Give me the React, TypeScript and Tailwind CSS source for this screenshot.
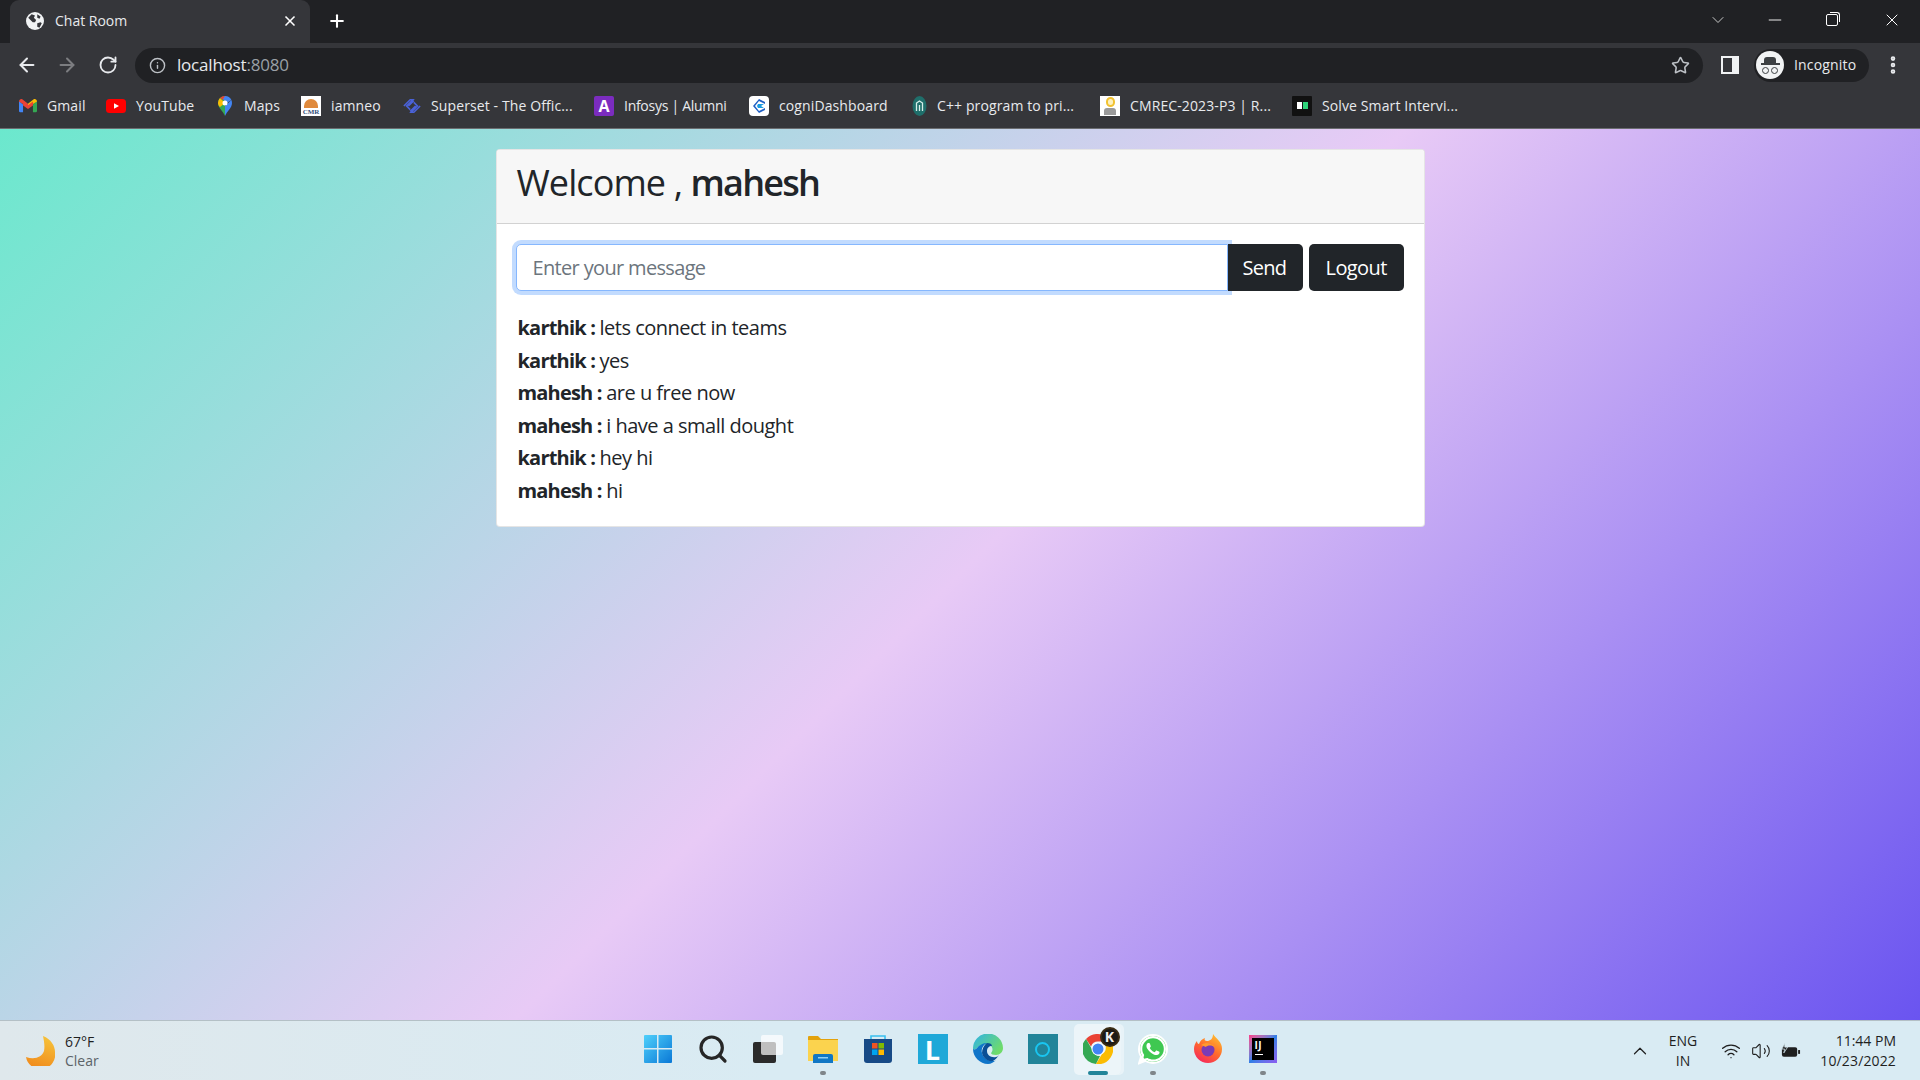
import {ReactNode} from "react";
import {ArrowLeft, ArrowRight, ChevronDown, ChevronUp, Info, Minus, MoreVertical, Plus, RotateCw, Search, Star, Volume2, Wifi, X} from "lucide-react";
import {FaWhatsapp} from "react-icons/fa";

const Globe = () => (
    <svg viewBox="0 0 16 16" className="h-[18px] w-[18px]">
        <circle cx="8" cy="8" r="8" fill="#f1f3f4" />
        <path d="M2 5l3-3 3 1-1 2 2 2-1 2H6L4 7zM10 10l3-1 1 1-2 4-2-1zM10 2l3 2-1 2-2-1z" fill="#35363a" />
    </svg>
);

const GmailIcon = () => (
    <svg viewBox="0 0 20 16" className="h-[15px] w-[18px]">
        <path d="M0 3v11a1.5 1.5 0 0 0 1.5 1.5H4.5V7z" fill="#4285f4" />
        <path d="M20 3v11a1.5 1.5 0 0 1-1.5 1.5H15.5V7z" fill="#34a853" />
        <path d="M0 3.5C0 1 2.5 0 4 1.2L10 6v4L0 3.5z" fill="#ea4335" />
        <path d="M20 3.5C20 1 17.5 0 16 1.2L10 6v4l10-6.5z" fill="#fbbc04" />
        <path d="M4.5 3.5L10 7.6l5.5-4.1V8L10 12 4.5 8z" fill="#ea4335" />
    </svg>
);

const YoutubeIcon = () => (
    <svg viewBox="0 0 20 14" className="h-[14px] w-[20px]">
        <rect width="20" height="14" rx="3.5" fill="#ff0000" />
        <path d="M8 4.2l5 2.8-5 2.8z" fill="#fff" />
    </svg>
);

const MapsIcon = () => (
    <svg viewBox="0 0 14 20" className="h-[20px] w-[14px]">
        <path d="M7 20C5 15 0 12 0 7a7 7 0 0 1 7-7z" fill="#34a853" />
        <path d="M7 20c2-5 7-8 7-13 0-1-.2-2-.6-3L7 10z" fill="#4285f4" />
        <path d="M0 7a7 7 0 0 1 2-5l5 5-5 4C.8 10 0 8.500 0 7z" fill="#fbbc04" />
        <path d="M2 2a7 7 0 0 1 5-2v5z" fill="#ea4335" />
        <path d="M7 0a7 7 0 0 1 6.400 4L9 7 5 3z" fill="#4285f4" />
        <circle cx="7" cy="7" r="2.500" fill="#fff" />
    </svg>
);

const CmrIcon = () => (
    <div className="flex h-5 w-5 flex-col items-center justify-end overflow-hidden bg-white">
        <div className="h-[9px] w-[14px] rounded-t-full bg-[#e08a3c]" />
        <div className="font-['Liberation_Serif',serif] text-[7px] font-bold leading-[8px] text-[#34507a]">CMR</div>
    </div>
);

const SupersetIcon = () => (
    <svg viewBox="0 0 20 18" className="h-[18px] w-[18px]" fill="none" stroke="#4a62d8" strokeWidth="1.800">
        <path d="M1 9l7-7h3L4 9l4 4M6 9l6-6M19 9l-7 7H9l7-7-4-4M14 9l-6 6" />
    </svg>
);

const AlumniIcon = () => (
    <div className="flex h-5 w-5 items-center justify-center rounded-[2px] bg-[#7b2cbf] font-['Open_Sans',sans-serif] text-[16px] font-bold text-white">
        A
    </div>
);

const CogniIcon = () => (
    <div className="flex h-5 w-5 items-center justify-center rounded-[4px] bg-white">
        <svg viewBox="0 0 14 14" className="h-[14px] w-[14px]">
            <path d="M7 0l6 3v2L7 2 3 7l4 5 6-3v2l-6 3-6-7z" fill="#1f5fc4" />
            <path d="M6 5h6l-3 2 3 2H6l-1-2z" fill="#1a9be0" />
        </svg>
    </div>
);

const GfgIcon = () => (
    <svg viewBox="0 0 14 20" className="h-[20px] w-[15px]">
        <ellipse cx="7" cy="10" rx="7" ry="10" fill="#1f6f6b" />
        <path d="M4 15V7l3-2 3 2v8M7 9v6" stroke="#d6efe9" strokeWidth="1.300" fill="none" />
    </svg>
);

const BulbIcon = () => (
    <div className="flex h-5 w-5 flex-col items-center bg-white pt-[1px]">
        <div className="h-[10px] w-[9px] rounded-full border-2 border-[#f2c230] bg-[#fdf1c0]" />
        <div className="mt-[1px] h-[7px] w-[12px] rounded-t-[3px] bg-[#9a9a9a]" />
    </div>
);

const NinjaIcon = () => (
    <div className="flex h-5 w-5 items-center justify-center gap-[1px] rounded-[1px] bg-[#111]">
        <div className="h-[7px] w-[5px] bg-white" />
        <div className="h-[7px] w-[5px] bg-[#2ed47a]" />
    </div>
);

const bookmarks: {icon: ReactNode; label: string; box: string; text: string; gap: string; tight?: boolean}[] = [
    {icon: <GmailIcon />, label: "Gmail", box: "w-[18px]", text: "w-[38px]", gap: "ml-[19px]"},
    {icon: <YoutubeIcon />, label: "YouTube", box: "w-[20px]", text: "w-[60px]", gap: "ml-[21px]"},
    {icon: <MapsIcon />, label: "Maps", box: "w-[14px]", text: "w-[38px] translate-x-[2px]", gap: "ml-[22px]"},
    {icon: <CmrIcon />, label: "iamneo", box: "w-[20px]", text: "w-[51px]", gap: "ml-[21px]"},
    {icon: <SupersetIcon />, label: "Superset - The Offic...", box: "w-[18px]", text: "w-[144px]", gap: "ml-[21px]"},
    {icon: <AlumniIcon />, label: "Infosys | Alumni", box: "w-[20px]", text: "w-[105px]", gap: "ml-[19px]", tight: true},
    {icon: <CogniIcon />, label: "cogniDashboard", box: "w-[20px]", text: "w-[110px]", gap: "ml-[20px]"},
    {icon: <GfgIcon />, label: "C++ program to pri...", box: "w-[15px]", text: "w-[144px]", gap: "ml-[23px]"},
    {icon: <BulbIcon />, label: "CMREC-2023-P3 | R...", box: "w-[20px]", text: "w-[143px]", gap: "ml-[19px]"},
    {icon: <NinjaIcon />, label: "Solve Smart Intervi...", box: "w-[20px]", text: "w-[136px]", gap: "ml-[19px]"},
];

const messages = [
    {from: "karthik", text: "lets connect in teams"},
    {from: "karthik", text: "yes"},
    {from: "mahesh", text: "are u free now"},
    {from: "mahesh", text: "i have a small dought"},
    {from: "karthik", text: "hey hi"},
    {from: "mahesh", text: "hi"},
];

const WindowsLogo = () => (
    <svg viewBox="0 0 30 30" className="h-[30px] w-[30px]">
        <defs>
            <linearGradient id="win" x1="0" y1="0" x2="1" y2="1">
                <stop offset="0" stopColor="#4fd0fb" />
                <stop offset="1" stopColor="#0a78d6" />
            </linearGradient>
        </defs>
        <path d="M1 2a1 1 0 0 1 1-1h12v13H1zM15.500 1H28a1 1 0 0 1 1 1v12H15.500zM1 15.500h13V29H2a1 1 0 0 1-1-1zM15.500 15.500H29V28a1 1 0 0 1-1 1H15.500z" fill="url(#win)" />
    </svg>
);

const FilesIcon = () => (
    <svg viewBox="0 0 30 28" className="h-[28px] w-[30px]">
        <path d="M0 2a1 1 0 0 1 1-1h9l3 3h17v4H0z" fill="#e3a20c" />
        <path d="M0 5h30v21H0z" fill="#fbd34e" />
        <path d="M5 21a2 2 0 0 1 2-2h16a2 2 0 0 1 2 2v7H5z" fill="#1177c4" />
        <rect x="10" y="22" width="10" height="1.500" fill="#8fd0f5" />
    </svg>
);

const StoreIcon = () => (
    <svg viewBox="0 0 30 30" className="h-[30px] w-[30px]">
        <path d="M8 5V2h14v3" fill="none" stroke="#38c0f0" strokeWidth="1.600" />
        <path d="M1 5h28v21a3 3 0 0 1-3 3H4a3 3 0 0 1-3-3z" fill="#174a86" />
        <rect x="9" y="9" width="5.500" height="5.500" fill="#f05323" />
        <rect x="15.500" y="9" width="5.500" height="5.500" fill="#7fba00" />
        <rect x="9" y="15.500" width="5.500" height="5.500" fill="#00a4ef" />
        <rect x="15.500" y="15.500" width="5.500" height="5.500" fill="#ffb900" />
    </svg>
);

const LIcon = () => (
    <div className="flex h-[30px] w-[30px] items-center justify-center bg-[#1fa8d8] font-['Open_Sans',sans-serif] text-[27px] font-bold leading-none text-white">
        L
    </div>
);

const EdgeIcon = () => (
    <svg viewBox="0 0 30 30" className="h-[30px] w-[30px]">
        <defs>
            <linearGradient id="edge" x1="0" y1="0" x2="1" y2="0.600">
                <stop offset="0" stopColor="#2fb2e8" />
                <stop offset="1" stopColor="#6fdc6a" />
            </linearGradient>
        </defs>
        <path d="M0 15a15 15 0 0 1 30-1c0 4-3 7-7 7-3 0-5-1-5-2 2-2 2-5 0-7-4-3-11-2-14 2-1 1-3 2-4 1z" fill="url(#edge)" />
        <path d="M0 15c2 1 3 0 4-1 2-3 6-5 10-5-4 2-6 6-5 10 1 5 6 8 11 8 1 0 2 0 3-1-2 2-5 4-8 4C7 30 0 23 0 15z" fill="#0f75c9" />
        <path d="M9 19c0-4 2-8 5-10 3 0 5 1 5 3-3 0-5 2-5 5 0 4 4 7 9 6 1 0 2-1 3-2-2 3-4 5-6 6-5 1-10-3-11-8z" fill="#0a4f96" />
    </svg>
);

const CortanaIcon = () => (
    <div className="flex h-[30px] w-[30px] items-center justify-center bg-[#218499]">
        <div className="h-[15px] w-[15px] rounded-full border-2 border-[#19c5f0]" />
    </div>
);

const ChromeIcon = () => (
    <div className="relative">
        <svg viewBox="0 0 30 30" className="h-[30px] w-[30px]">
            <path d="M15 0a15 15 0 0 1 13 7.500H15a7.500 7.500 0 0 0-7 5L3 5a15 15 0 0 1 12-5z" fill="#ea4335" />
            <path d="M3 5l7 12a7 7 0 0 0 7 5l-4 8A15 15 0 0 1 3 5z" fill="#34a853" />
            <path d="M28 7.500A15 15 0 0 1 13 30l6-10a7 7 0 0 0 0-12.500z" fill="#fbbc04" />
            <circle cx="15" cy="15" r="6.500" fill="#fff" />
            <circle cx="15" cy="15" r="5.500" fill="#4285f4" />
        </svg>
        <div className="absolute right-[-7px] top-[-7px] flex h-[20px] w-[20px] items-center justify-center rounded-full border-2 border-[#3a2c14] bg-[#1d1a15] font-['Open_Sans',sans-serif] text-[14px] font-bold leading-none text-[#f0f0f0]">
            K
        </div>
    </div>
);

const WhatsappIcon = () => (
    <div className="relative flex h-[30px] w-[30px] items-center justify-center rounded-full bg-white">
        <div className="absolute bottom-[-1px] left-0 h-[9px] w-[9px] bg-white [clip-path:polygon(0_100%,100%_60%,30%_0)]" />
        <div className="relative flex h-[26px] w-[26px] items-center justify-center rounded-full bg-[#3fc851]">
            <FaWhatsapp className="h-[30px] w-[30px] text-white" />
        </div>
    </div>
);

const FirefoxIcon = () => (
    <svg viewBox="0 0 30 30" className="h-[30px] w-[30px]">
        <defs>
            <linearGradient id="fox" x1="0.800" y1="0" x2="0.200" y2="1">
                <stop offset="0" stopColor="#ffc02f" />
                <stop offset="0.500" stopColor="#ff6b2c" />
                <stop offset="1" stopColor="#f5245e" />
            </linearGradient>
        </defs>
        <path d="M20 0c1 2 4 4 6 7 2 2 3 5 3 8a14 14 0 1 1-28 0c0-3 1-6 3-8 0 2 1 3 2 3 1-3 3-5 6-6-1 2 0 3 2 3 3 0 6-2 6-7z" fill="url(#fox)" />
        <circle cx="15" cy="16" r="6.500" fill="#7a3bb5" />
        <path d="M8 11c4-3 10-3 14 2-3-2-8-2-9 0z" fill="#ff9a2e" />
    </svg>
);

const IdeaIcon = () => (
    <div className="flex h-[28px] w-[28px] bg-gradient-to-br from-[#fb3a88] via-[#2d7fe6] to-[#8a5cf0] p-[3px]">
        <div className="flex h-full w-full flex-col bg-black pl-[3px] pt-[1px] font-['Open_Sans',sans-serif] text-[10px] font-bold leading-[12px] tracking-[0.05em] text-white">
            IJ
            <div className="mt-[3px] h-[1px] w-[8px] bg-white" />
        </div>
    </div>
);

const taskbarApps: {icon: ReactNode; dot?: boolean; active?: boolean}[] = [
    {icon: <WindowsLogo />},
    {icon: <Search className="h-[32px] w-[32px] text-[#262626]" strokeWidth={2.400} />},
    {
        icon: (
            <div className="relative h-[28px] w-[30px]">
                <div className="absolute bottom-0 left-0 h-[21px] w-[23px] rounded-[2px] bg-[#2b2b2b]" />
                <div className="absolute right-0 top-0 h-[20px] w-[22px] rounded-[2px] bg-white/70" />
            </div>
        ),
    },
    {icon: <FilesIcon />, dot: true},
    {icon: <StoreIcon />},
    {icon: <LIcon />},
    {icon: <EdgeIcon />},
    {icon: <CortanaIcon />},
    {icon: <ChromeIcon />, active: true},
    {icon: <WhatsappIcon />, dot: true},
    {icon: <FirefoxIcon />},
    {icon: <IdeaIcon />, dot: true},
];

const App = () => {
    return (
        <div className="flex h-[1080px] w-[1920px] flex-col overflow-hidden font-['Open_Sans',sans-serif]">
            {/* tab strip */}
            <div className="flex h-[43px] shrink-0 items-end bg-[#202124] pl-[10px] pr-[8px]">
                <div className="flex h-[43px] w-[300px] items-center rounded-t-[9px] bg-[#35363a] pb-[2px] pl-[16px] pr-[12px]">
                    <Globe />
                    <span className="ml-[11px] flex-1 text-[14px] text-[#e8eaed]">Chat Room</span>
                    <X className="h-[16px] w-[16px] text-white" strokeWidth={2.500} />
                </div>
                <Plus className="ml-[17px] mb-[12px] h-[20px] w-[20px] text-white" strokeWidth={2.500} />
                <div className="mb-[13px] ml-auto flex items-center">
                    <ChevronDown className="h-[20px] w-[20px] text-[#c8c8c8]" strokeWidth={1.200} />
                    <Minus className="ml-[37px] h-[20px] w-[20px] text-white" strokeWidth={1.100} />
                    <div className="relative ml-[41px] h-[12px] w-[12px] rounded-[2px] border border-white">
                        <div className="absolute right-[-3px] top-[-3px] h-[10px] w-[10px] rounded-tr-[3px] border-r border-t border-white" />
                    </div>
                    <X className="ml-[44px] mr-[10px] h-[20px] w-[20px] text-white" strokeWidth={1.200} />
                </div>
            </div>

            {/* toolbar */}
            <div className="flex h-[44px] shrink-0 items-center bg-[#35363a] pl-[16px]">
                <ArrowLeft className="h-[22px] w-[22px] text-[#e8eaed]" strokeWidth={2.200} />
                <ArrowRight className="ml-[18px] h-[22px] w-[22px] text-[#7c7d80]" strokeWidth={2.200} />
                <RotateCw className="ml-[20px] h-[20px] w-[20px] text-[#e8eaed]" strokeWidth={2.200} />
                <div className="ml-[17px] flex h-[35px] w-[1568px] items-center rounded-full bg-[#202124] pl-[14px] pr-[13px]">
                    <Info className="h-[17px] w-[17px] text-[#bdc1c6]" strokeWidth={2} />
                    <span className="ml-[11px] flex-1 text-[17px] tracking-[-0.012em] text-[#e8eaed]">
                        localhost<span className="text-[#9aa0a6]">:8080</span>
                    </span>
                    <Star className="h-[19px] w-[19px] text-[#bdc1c6]" strokeWidth={2} />
                </div>
                <div className="ml-[18px] flex h-[18px] w-[18px] justify-end border-2 border-[#f1f3f4]">
                    <div className="h-full w-[5px] bg-[#f1f3f4]" />
                </div>
                <div className="ml-[15px] flex h-[33px] w-[115px] items-center rounded-full bg-[#202124] pl-[2px]">
                    <div className="flex h-[28px] w-[28px] flex-col items-center justify-center rounded-full bg-[#f1f3f4]">
                        <div className="h-[6px] w-[12px] rounded-t-[3px] bg-[#3c4043]" />
                        <div className="h-[2px] w-[19px] bg-[#3c4043]" />
                        <div className="mt-[2px] flex gap-[2px]">
                            <div className="h-[7px] w-[7px] rounded-full border border-[#3c4043]" />
                            <div className="h-[7px] w-[7px] rounded-full border border-[#3c4043]" />
                        </div>
                    </div>
                    <span className="ml-[10px] pb-[1px] text-[14px] tracking-[0.012em] text-[#e8eaed]">Incognito</span>
                </div>
                <MoreVertical className="ml-[13px] h-[22px] w-[22px] text-[#e8eaed]" strokeWidth={3} />
            </div>

            {/* bookmarks bar */}
            <div className="flex h-[42px] shrink-0 items-center border-b border-[#6b6d70] bg-[#35363a] pb-[4px]">
                {bookmarks.map((b) => (
                    <div key={b.label} className={`flex items-center ${b.gap}`}>
                        <div className={`flex items-center justify-center ${b.box}`}>{b.icon}</div>
                        <span className={`ml-[10px] whitespace-nowrap text-[14px] text-[#e8eaed] ${b.tight ? "tracking-[-0.02em]" : "tracking-[0.008em]"} ${b.text}`}>
                            {b.label}
                        </span>
                    </div>
                ))}
            </div>

            {/* page */}
            <div className="flex flex-1 justify-center bg-[linear-gradient(135deg,#6be8cd_0%,#e8caf6_50%,#6a54f0_100%)] pt-[20px]">
                <div className="h-[378px] w-[929px] overflow-hidden rounded-[4px] border border-black/10 bg-white text-[#212529]">
                    <div className="flex h-[74px] items-center border-b border-black/15 bg-[#f7f7f7] pb-[7px] pl-[20px]">
                        <h2 className="text-[36px] font-medium leading-none tracking-[-0.025em]">
                            Welcome , <b className="font-semibold tracking-[-0.05em]">mahesh</b>
                        </h2>
                    </div>
                    <div className="pl-[19px] pr-[20px] pt-[20px]">
                        <div className="flex">
                            <input
                                readOnly
                                placeholder="Enter your message"
                                className="h-[47px] w-[715px] rounded-l-[5px] border border-[#86b7fe] bg-white px-[16px] text-[20px] tracking-[-0.033em] shadow-[0_0_0_4px_rgba(13,110,253,0.25)] outline-none placeholder:text-[#6c757d]"
                            />
                            <button className="relative h-[47px] w-[75px] rounded-r-[5px] bg-[#212529] pr-[2px] text-[20px] tracking-[-0.035em] text-white">
                                Send
                            </button>
                            <button className="ml-[6px] h-[47px] w-[95px] rounded-[5px] bg-[#212529] text-[20px] tracking-[-0.03em] text-white">
                                Logout
                            </button>
                        </div>
                        <ul className="mt-[21px] pl-[2px] text-[20px] leading-[32.5px] tracking-[-0.025em]">
                            {messages.map((m, i) => (
                                <li key={i}>
                                    <b className="font-bold tracking-[-0.04em]">{m.from} : </b>
                                    {m.text}
                                </li>
                            ))}
                        </ul>
                    </div>
                </div>
            </div>

            {/* taskbar */}
            <div className="grid h-[60px] shrink-0 grid-cols-[1fr_660px_1fr] items-center border-t border-[#b4c0c6] bg-[linear-gradient(90deg,#dfe8ec,#d9ebf3_40%,#d9ebf3)]">
                <div className="flex items-center pl-[25px]">
                    <svg viewBox="0 0 30 30" className="h-[30px] w-[30px]">
                        <defs>
                            <linearGradient id="moon" x1="0.700" y1="0" x2="0.400" y2="1">
                                <stop offset="0" stopColor="#f6c23a" />
                                <stop offset="1" stopColor="#f08a1c" />
                            </linearGradient>
                        </defs>
                        <path d="M18 0c8 3 12 10 12 16a14 14 0 0 1-29 5c9 3 16 0 18-6 1-5 0-10-1-15z" fill="url(#moon)" />
                    </svg>
                    <div className="ml-[10px] text-[14px] leading-[19px]">
                        <div className="text-[#1f1f1f]">67°F</div>
                        <div className="text-[#5c6368]">Clear</div>
                    </div>
                </div>
                <div className="mb-[3px] flex">
                    {taskbarApps.map((app, i) => (
                        <div key={i} className="relative flex h-[55px] w-[55px] items-center justify-center">
                            {app.active && <div className="absolute inset-x-[4px] inset-y-[2px] rounded-[5px] bg-white/50 shadow-[3px_0_0_rgba(255,255,255,0.4)]" />}
                            <div className="relative">{app.icon}</div>
                            {app.dot && <div className="absolute bottom-[2px] h-[4px] w-[6px] rounded-full bg-[#7f8589]" />}
                            {app.active && <div className="absolute bottom-[2px] h-[4px] w-[20px] rounded-full bg-[#218499]" />}
                        </div>
                    ))}
                </div>
                <div className="flex items-center justify-end pr-[24px] text-[#1f1f1f]">
                    <ChevronUp className="h-[22px] w-[22px]" strokeWidth={1.300} />
                    <div className="ml-[18px] text-center text-[14px] leading-[20px]">
                        ENG
                        <br />
                        IN
                    </div>
                    <Wifi className="ml-[24px] h-[20px] w-[20px]" strokeWidth={1.600} />
                    <Volume2 className="ml-[10px] h-[20px] w-[20px]" strokeWidth={1.300} />
                    <svg viewBox="0 0 22 16" className="ml-[9px] h-[16px] w-[21px]">
                        <rect x="2" y="4" width="16" height="10" rx="2" fill="#1f1f1f" />
                        <rect x="19" y="7" width="2" height="4" fill="#1f1f1f" />
                        <path d="M5 0L2 6h3l-1 4 4-6H5z" fill="#1f1f1f" stroke="#d9ebf3" strokeWidth="0.800" />
                    </svg>
                    <div className="ml-[19px] text-right text-[14px] leading-[20px]">
                        <div>11:44 PM</div>
                        <div className="tracking-[0.01em]">10/23/2022</div>
                    </div>
                </div>
            </div>
        </div>
    );
};

export default App;
